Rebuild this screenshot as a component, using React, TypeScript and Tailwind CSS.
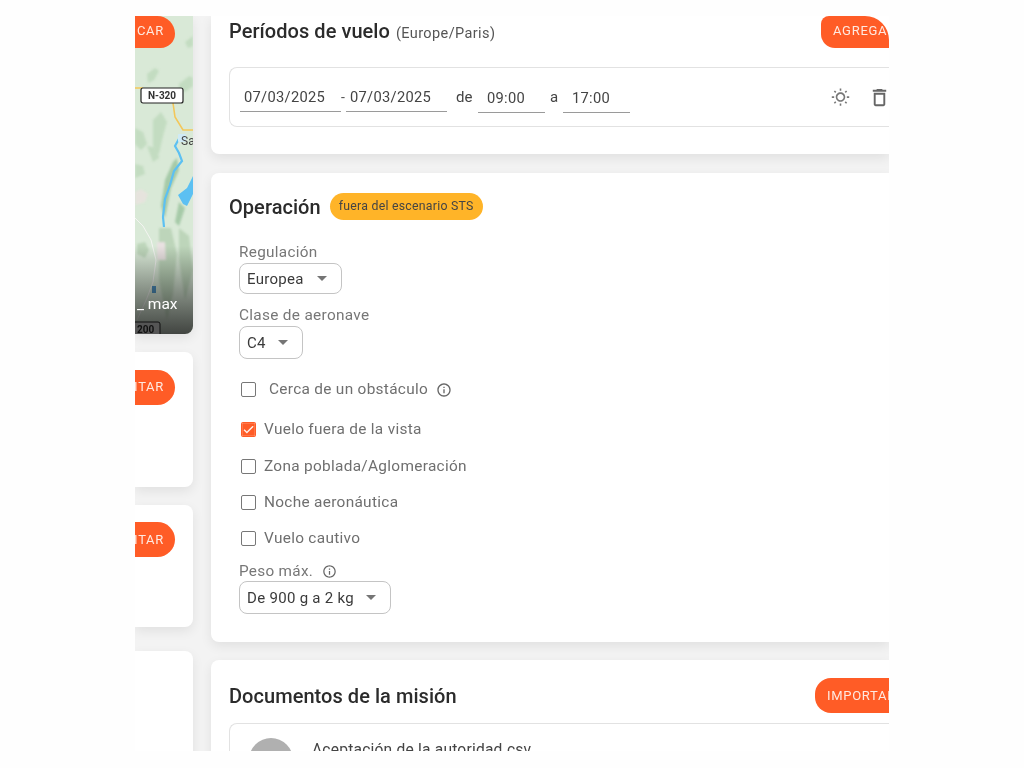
import { MdDeleteOutline, MdOutlineInfo, MdOutlineWbSunny, MdCheck } from "react-icons/md";

const cardShadow = "shadow-[0_4px_12px_rgba(0,0,0,0.08)]";

function MapPreview() {
  return (
    <svg viewBox="0 0 58 318" preserveAspectRatio="none" className="absolute inset-0 h-[318px] w-[58px]">
      <defs>
        <linearGradient id="fade" x1="0" y1="0" x2="0" y2="1">
          <stop offset="0" stopColor="#000" stopOpacity="0" />
          <stop offset="1" stopColor="#1c1c1c" stopOpacity="0.8" />
        </linearGradient>
      </defs>
      <rect width="58" height="318" fill="#d9e9d7" />
      <g className="blur-[1px]">
        <path d="M12 58l8-6 4 3-5 9-6 3zM44 68l10-8 4 2v8l-8 6-6-3zM50 26l8-6v10l-5 2zM18 104l8-8 6 10-4 14-4 18-6-8zM0 112l8 4 4 12-6 6-6-6zM12 130l10 2 2 10-6 4zM0 148l8 2 2 8-10 4z" fill="#c3dcc1" />
        <path d="M0 176l6-3 7 5-3 8-10 3z" fill="#e6e3dd" />
        <path d="M38 146l4-4 2 12-8 18-6 30-4-12 4-26zM44 186l6 6-6 18-4-4z" fill="#a6caa8" />
        <path d="M2 228l8-2 4 8-4 8-8-4zM24 212h12l6 26-4 40-6 26-8-40zM44 212l10 8 4 34-8 30-6-40z" fill="#bdd5ba" />
        <path d="M22 226h8l1 18h-9z" fill="#e9e1e1" />
      </g>
      <path d="M0 72h8M38 87l2 14 8 13h10" fill="none" stroke="#f3c75a" strokeWidth="1.6" />
      <path d="M45 121l-5 9 4 7 3 8-8 10-4 14-5 14-2 18 1 10" fill="none" stroke="#5cc0f2" strokeWidth="2.2" />
      <path d="M58 160l-6 12-9 7 5 9 4 2 6-12z" fill="#5cc0f2" />
      <rect x="43" y="118" width="8" height="8" rx="1" fill="#cfeaf6" />
      <path d="M0 202l8 8 8 14 5 20-3 22-6 16-10 22" fill="none" stroke="#f4f4f2" strokeWidth="1" />
      <path d="M17 270h4v7h-4z" fill="#4a8fc0" />
      <rect y="230" width="58" height="88" fill="url(#fade)" />
      <rect x="6" y="72" width="42" height="15" rx="2" fill="#fff" stroke="#222" strokeWidth="1.2" />
      <text x="27" y="83" textAnchor="middle" fontSize="10" fontWeight="700" fill="#333" fontFamily="Roboto, sans-serif">N-320</text>
      <text x="46" y="129" fontSize="12" fill="#444" fontFamily="Roboto, sans-serif">Sa</text>
      <text x="2" y="293" fontSize="15.5" fill="#fff" fontFamily="Roboto, sans-serif">_ max</text>
      <rect x="-8" y="306" width="33" height="15" rx="2" fill="#555" stroke="#111" />
      <text x="2" y="317" fontSize="10" fontWeight="700" fill="#111" fontFamily="Roboto, sans-serif">200</text>
    </svg>
  );
}

function OrangeButton({ label, className }: { label: string; className: string }) {
  return (
    <button className={`flex shrink-0 items-center whitespace-nowrap overflow-hidden bg-[#ff5c26] text-[13px] tracking-[0.7px] text-[#ffe9e0] ${className}`}>
      {label}
    </button>
  );
}

function DateField({ value, className }: { value: string; className: string }) {
  return (
    <div className={`flex items-center border-b border-[#9a9a9a] pt-[2px] text-[14.7px] tracking-[0.3px] text-[#444] ${className}`}>
      {value}
    </div>
  );
}

function SelectBox({ value, className }: { value: string; className: string }) {
  return (
    <div className={`flex items-center justify-between rounded-lg border border-[#c4c4c4] pl-[7px] pr-[14px] text-[15px] tracking-[0.3px] text-[#3a3a3a] ${className}`}>
      <span className="pt-[2px]">{value}</span>
      <span className="h-0 w-0 border-x-[5px] border-t-[5px] border-x-transparent border-t-[#757575]" />
    </div>
  );
}

function CheckRow({ label, checked, className }: { label: string; checked?: boolean; className: string }) {
  return (
    <div className={`flex h-[18px] items-center pl-[2px] text-[15.4px] tracking-[0.3px] text-[#6f6f6f] ${className}`}>
      {checked ? (
        <span className="-mt-[2px] mr-2 flex h-[15px] w-[15px] items-center justify-center rounded-[2px] bg-[#ff5c26] text-white">
          <MdCheck size={13} stroke="currentColor" strokeWidth={0.6} />
        </span>
      ) : (
        <span className="-mt-[2px] mr-2 h-[15px] w-[15px] rounded-[2px] border-[1.5px] border-[#777]" />
      )}
      {label}
    </div>
  );
}

export default function App() {
  return (
    <div className="h-screen w-full overflow-hidden bg-[#fefefe] pl-[135px] pt-4 font-['Roboto',sans-serif]">
      <div className="flex h-[735px] w-[754px] gap-[18px] overflow-hidden bg-[#f3f3f3] blur-[0.6px]">
        {/* left column, cut off by the frame */}
        <div className="flex w-[58px] shrink-0 flex-col">
          <div className={`relative h-[318px] shrink-0 overflow-hidden rounded-br-lg ${cardShadow}`}>
            <MapPreview />
            <div className="absolute right-[18px] top-0">
              <OrangeButton label="CAR" className="h-8 w-[90px] justify-end rounded-r-[16px] rounded-tr-[20px] pb-[2px] pr-[11px]" />
            </div>
          </div>
          <div className={`mt-[18px] flex h-[135px] shrink-0 justify-end overflow-hidden rounded-r-lg bg-white pr-[18px] pt-[18px] ${cardShadow}`}>
            <OrangeButton label="EDITAR" className="h-[35px] w-[70px] justify-end rounded-full pb-[1px] pr-[11px]" />
          </div>
          <div className={`mt-[18px] flex h-[122px] shrink-0 justify-end overflow-hidden rounded-r-lg bg-white pr-[18px] pt-[17px] ${cardShadow}`}>
            <OrangeButton label="EDITAR" className="h-[35px] w-[70px] justify-end rounded-full pr-[11px]" />
          </div>
          <div className={`mt-6 h-[120px] shrink-0 rounded-tr-lg bg-white ${cardShadow}`} />
        </div>

        {/* right column */}
        <div className="flex w-[678px] shrink-0 flex-col">
          <div className={`h-[138px] shrink-0 rounded-bl-lg bg-white pl-[18px] ${cardShadow}`}>
            <div className="flex h-8 items-center justify-between">
              <div className="flex items-baseline pb-[2px] text-[#2b2b2b]">
                <span className="text-[20px] font-medium tracking-[0.05px]">Períodos de vuelo</span>
                <span className="ml-[6px] text-[14.5px] tracking-[0.4px] text-[#555]">(Europe/Paris)</span>
              </div>
              <OrangeButton label="AGREGAR" className="h-8 w-[68px] rounded-bl-[14px] rounded-tl-[8px] rounded-tr-[24px] pb-[2px] pl-3" />
            </div>
            <div className="mt-[19px] flex h-[60px] items-center rounded-l-lg border border-r-0 border-[#e2e2e2] pl-[10px]">
              <DateField value="07/03/2025" className="h-[29px] w-[101px] pl-1" />
              <span className="w-[5px] text-[14px] text-[#555]">-</span>
              <DateField value="07/03/2025" className="h-[29px] w-[101px] pl-1" />
              <span className="ml-[9px] w-[22px] text-[15px] text-[#444]">de</span>
              <DateField value="09:00" className="mt-[1px] h-[31px] w-[67px] pl-[9px]" />
              <span className="ml-[5px] w-[13px] text-[15px] text-[#444]">a</span>
              <DateField value="17:00" className="mt-[1px] h-[31px] w-[67px] pl-[9px]" />
              <MdOutlineWbSunny size={19} className="ml-auto text-[#777]" />
              <MdDeleteOutline size={23} className="-mr-[2px] ml-[18px] text-[#666]" />
            </div>
          </div>

          <div className={`mt-[19px] h-[469px] shrink-0 rounded-l-lg bg-white pl-[18px] pt-5 ${cardShadow}`}>
            <div className="flex h-[27px] items-center">
              <span className="text-[20px] font-medium tracking-[0.05px] text-[#2b2b2b]">Operación</span>
              <span className="ml-[9px] flex h-[27px] w-[153px] items-center justify-center rounded-full bg-[#ffb428] text-[12.3px] tracking-[0.25px] text-[#444]">
                fuera del escenario STS
              </span>
            </div>
            <div className="pl-[10px]">
              <div className="mt-[23px] h-[20px] text-[15.3px] leading-[19px] tracking-[0.3px] text-[#777]">Regulación</div>
              <SelectBox value="Europea" className="h-[31px] w-[103px]" />
              <div className="mt-[12px] h-[20px] text-[15.4px] leading-[19px] tracking-[0.3px] text-[#777]">Clase de aeronave</div>
              <SelectBox value="C4" className="h-[33px] w-16" />
              <div className="mt-[22px] flex h-[18px] items-center pl-[2px] text-[15.4px] tracking-[0.3px] text-[#6f6f6f]">
                <span className="-mt-[2px] mr-[13px] h-[15px] w-[15px] rounded-[2px] border-[1.5px] border-[#777]" />
                Cerca de un obstáculo
                <MdOutlineInfo size={16} className="ml-2 text-[#666]" />
              </div>
              <CheckRow label="Vuelo fuera de la vista" checked className="mt-[22px]" />
              <CheckRow label="Zona poblada/Aglomeración" className="mt-[19px]" />
              <CheckRow label="Noche aeronáutica" className="mt-[18px]" />
              <CheckRow label="Vuelo cautivo" className="mt-[18px]" />
              <div className="mt-[13px] flex h-5 items-center text-[15.3px] tracking-[0.3px] text-[#777]">
                Peso máx.
                <MdOutlineInfo size={15} className="ml-[9px] text-[#666]" />
              </div>
              <SelectBox value="De 900 g a 2 kg" className="h-[33px] w-[152px]" />
            </div>
          </div>

          <div className={`mt-[18px] h-[200px] shrink-0 rounded-tl-lg bg-white pl-[18px] pt-[18px] ${cardShadow}`}>
            <div className="flex h-[35px] items-center justify-between">
              <span className="text-[20px] font-medium tracking-[0.05px] text-[#2b2b2b]">Documentos de la misión</span>
              <OrangeButton label="IMPORTAR" className="h-[35px] w-[74px] rounded-l-[16px] pl-3" />
            </div>
            <div className="mt-[10px] flex rounded-tl-lg border-l border-t border-[#e2e2e2] pl-[19px] pt-[14px]">
              <div className="h-11 w-11 rounded-full bg-[#b0b0b0]" />
              <span className="ml-[19px] text-[15.6px] leading-6 tracking-[0.2px] text-[#444]">Aceptación de la autoridad.csv</span>
            </div>
          </div>
        </div>
      </div>
    </div>
  );
}
